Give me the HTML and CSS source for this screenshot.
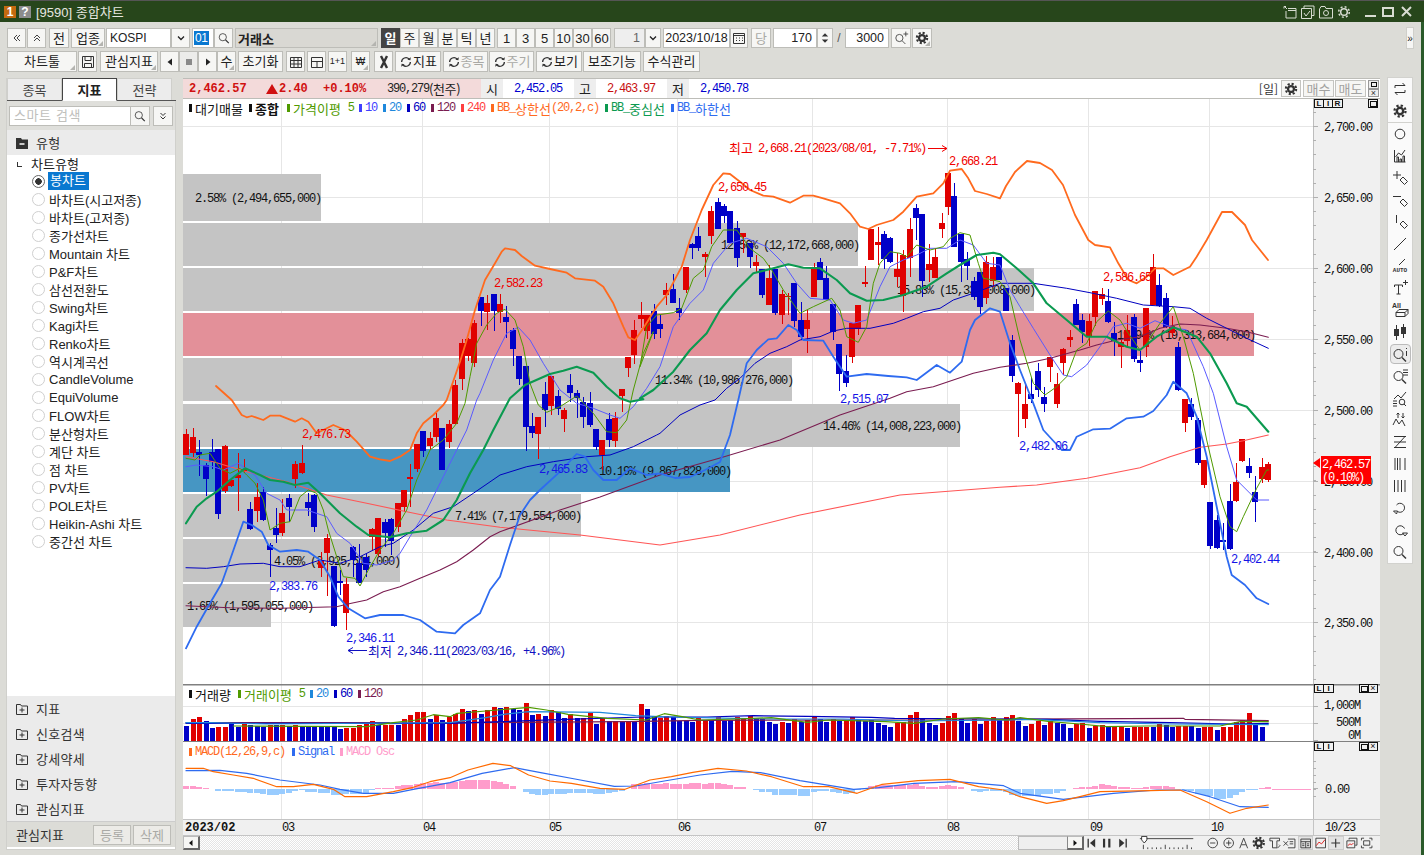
FILE: index.html
```html
<!DOCTYPE html>
<html lang="ko">
<head>
<meta charset="utf-8">
<title>[9590] 종합차트</title>
<link rel="stylesheet" href="styles.css">
</head>
<body>
<svg class="defs" width="0" height="0" aria-hidden="true">
  <symbol id="gear" viewBox="0 0 16 16"><circle cx="8" cy="8" r="3.4" fill="none" stroke="currentColor" stroke-width="2.6"/><circle cx="8" cy="8" r="5.9" fill="none" stroke="currentColor" stroke-width="2.4" stroke-dasharray="2.4 2.23"/></symbol>
  <symbol id="mag" viewBox="0 0 20 20"><circle cx="8.5" cy="9" r="4.5" fill="none" stroke="currentColor"/><path d="M12 12.5l4 4" stroke="currentColor" stroke-width="1.4"/></symbol>
  <symbol id="tag" viewBox="0 0 20 20"><path d="M10 12l3-3 4.5 4.5-3 3z" fill="none" stroke="currentColor"/></symbol>
  <symbol id="ref" viewBox="0 0 16 16"><path d="M3 8a5 5 0 0 1 8.500-3.500M13 8a5 5 0 0 1-8.500 3.500" fill="none" stroke="currentColor" stroke-width="1.500"/><path d="M9.500 5.500l3.500.5.500-3.500zM6.500 10.500L3 10l-.5 3.500z" fill="currentColor"/></symbol>
</svg>

<div class="window">
  <header class="titlebar">
    <span class="wbadge orange">1</span><span class="wbadge grey">?</span>
    <span class="wtitle">[9590] 종합차트</span>
    <span class="wicons">
      <svg class="wi" viewBox="0 0 14 14"><path d="M3 1.500h-2v2M1 1l3 3M5 3.500h8v9.500H3V6M5 5.500h8" fill="none" stroke="currentColor"/></svg>
      <svg class="wi" viewBox="0 0 14 14"><path d="M3 3.500V1h10v9.500h-2M.5 3.500h10v10H.5zM3 8l2 3 4-5" fill="none" stroke="currentColor"/></svg>
      <svg class="wi" viewBox="0 0 14 14"><path d="M.5 3.500V13h13V3.500H7L6 1.500H2L1 3.500" fill="none" stroke="currentColor"/><circle cx="7" cy="8" r="2.500" fill="none" stroke="currentColor"/></svg>
      <svg class="wi" viewBox="0 0 14 14"><circle cx="7" cy="7" r="3.300" fill="none" stroke="currentColor" stroke-width="1.500"/><circle cx="7" cy="7" r="5.300" fill="none" stroke="currentColor" stroke-width="1.500" stroke-dasharray="2 2.160"/></svg>
      <span class="wmin"></span><span class="wmax"></span>
      <svg class="wx" viewBox="0 0 11 11"><path d="M1 1l9 9M10 1l-9 9" stroke="currentColor" stroke-width="2"/></svg>
    </span>
  </header>

  <div class="toolbars">
    <div class="row">
      <button class="b w19 fine"><svg class="i8" viewBox="0 0 8 8"><path d="M4 1L1 4l3 3M7 1L4 4l3 3" fill="none" stroke="currentColor"/></svg></button>
      <button class="b w19 ml1 fine"><svg class="i8" viewBox="0 0 8 8"><path d="M1 4l3-3 3 3M1 7l3-3 3 3" fill="none" stroke="currentColor"/></svg></button>
      <button class="b w20 ml3">전</button>
      <button class="b w34 ml2 corner">업종</button>
      <div class="field w65 ml1 left">KOSPI</div>
      <button class="b w19"><svg class="i8" viewBox="0 0 8 8"><path d="M1 2.500l3 3 3-3" fill="none" stroke="currentColor" stroke-width="1.300"/></svg></button>
      <div class="field w22 ml2 codef"><span class="sel">01</span></div>
      <button class="b w19"><svg class="i16" viewBox="0 0 20 20"><use href="#mag"/></svg></button>
      <div class="field w143 ml2 exch corner">거래소</div>
      <button class="b w19 ml3 on">일</button><button class="b w19">주</button><button class="b w19">월</button><button class="b w19">분</button><button class="b w19">틱</button><button class="b w19">년</button>
      <button class="b w19 ml2">1</button><button class="b w19">3</button><button class="b w19">5</button><button class="b w19">10</button><button class="b w19">30</button><button class="b w19">60</button>
      <div class="field w31 ml3 right dimf">1</div>
      <button class="b w16"><svg class="i8" viewBox="0 0 8 8"><path d="M1 2.500l3 3 3-3" fill="none" stroke="currentColor" stroke-width="1.300"/></svg></button>
      <div class="field w67 ml2 center">2023/10/18</div>
      <button class="b w18"><svg class="i16" viewBox="0 0 16 16"><path d="M2.500 3.500h11v10h-11zM2.500 5.500h11M5 8h1M8 8h1M11 8h1M5 10.500h1M8 10.500h1M11 10.500h1" fill="none" stroke="currentColor"/></svg></button>
      <button class="b w20 ml3 dis">당</button>
      <div class="field w44 ml2 right">170</div>
      <button class="b w16 spin"><svg class="i16" viewBox="0 0 16 20"><path d="M8 4l4 4H4zM8 16l4-4H4z" fill="currentColor"/></svg></button>
      <span class="slash">/</span>
      <div class="field w44 right">3000</div>
      <button class="b w20 ml2"><svg class="i16" viewBox="0 0 20 20"><circle cx="8" cy="10" r="4.500" fill="none" stroke="currentColor"/><path d="M11.500 13.500l4 4M13 5h6M16 2v6" stroke="currentColor" fill="none"/></svg></button>
      <button class="b w20 ml1 corner"><svg class="i14" viewBox="0 0 16 16"><use href="#gear"/></svg></button>
      <button class="more">»</button>
    </div>
    <div class="row r2">
      <button class="b w70 corner">차트툴</button>
      <button class="b w19 ml1"><svg class="i16" viewBox="0 0 16 16"><path d="M2.500 2.500h11v11h-11zM5 2.500v4h6v-4M4.500 13.500v-4h7v4" fill="none" stroke="currentColor"/></svg></button>
      <button class="b w58 ml3 corner">관심지표</button>
      <button class="b w19 ml2 sym"><svg class="i8" viewBox="0 0 8 8"><path d="M6 .5v7L1.500 4z" fill="currentColor"/></svg></button>
      <button class="b w19 stop"><svg class="i8" viewBox="0 0 8 8"><path d="M1 1h6v6H1z" fill="#8a8a8a"/></svg></button>
      <button class="b w19 sym"><svg class="i8" viewBox="0 0 8 8"><path d="M2 .5v7L6.500 4z" fill="currentColor"/></svg></button>
      <button class="b w19 corner">수</button>
      <button class="b w45 ml2">초기화</button>
      <button class="b w19 ml3"><svg class="i16" viewBox="0 0 16 16"><path d="M2.500 3.500h11v10h-11zM2.500 6.500h11M2.500 10h11M6 3.500v10M10 3.500v10" fill="none" stroke="#333"/></svg></button>
      <button class="b w19 ml2"><svg class="i16" viewBox="0 0 16 16"><path d="M2.500 3.500h11v10h-11zM2.500 7.500h11M8 7.500v6" fill="none" stroke="#333"/></svg></button>
      <button class="b w19 ml2 tiny">1+1</button>
      <button class="b w19 ml4 corner won">₩</button>
      <button class="b w19 ml4"><svg class="i16" viewBox="0 0 16 16"><path d="M5 2l6 12M11 2L5 14" stroke="#333" stroke-width="2.400" fill="none"/></svg></button>
      <button class="b w46 ml2 rf"><svg class="i14" viewBox="0 0 16 16"><use href="#ref"/></svg>지표</button>
      <button class="b w45 ml2 rf dis"><svg class="i14 disi" viewBox="0 0 16 16"><use href="#ref"/></svg>종목</button>
      <button class="b w45 ml1 rf dis"><svg class="i14 disi" viewBox="0 0 16 16"><use href="#ref"/></svg>주기</button>
      <button class="b w46 ml2 rf"><svg class="i14" viewBox="0 0 16 16"><use href="#ref"/></svg>보기</button>
      <button class="b w58 ml1">보조기능</button>
      <button class="b w57 ml2">수식관리</button>
    </div>
  </div>

  <div class="main">
    <aside class="side">
      <nav class="tabs"><span class="tab">종목</span><span class="tab act">지표</span><span class="tab">전략</span></nav>
      <div class="searchrow">
        <div class="search">스마트 검색</div>
        <button class="sbtn"><svg class="i16" viewBox="0 0 20 20"><use href="#mag"/></svg></button>
        <button class="sbtn wide"><svg class="i8" viewBox="0 0 8 8"><path d="M1.500 1l2.500 2.500L6.500 1M1.500 4.500L4 7l2.500-2.500" fill="none" stroke="currentColor"/></svg></button>
      </div>
      <div class="acc head"><svg class="fold" viewBox="0 0 12 12"><path d="M0 1h5l1 1.500h6V12H0z" fill="#333"/><path d="M3.500 7h5" stroke="#fff" stroke-width="1.500"/></svg>유형</div>
      <div class="tree">
        <div class="troot"><i class="ell"></i>차트유형</div>
        <div class="opt"><i class="radio chk"></i><span class="selname">봉차트</span></div>
        <div class="opt"><i class="radio"></i>바차트(시고저종)</div>
        <div class="opt"><i class="radio"></i>바차트(고저종)</div>
        <div class="opt"><i class="radio"></i>종가선차트</div>
        <div class="opt"><i class="radio"></i>Mountain 차트</div>
        <div class="opt"><i class="radio"></i>P&amp;F차트</div>
        <div class="opt"><i class="radio"></i>삼선전환도</div>
        <div class="opt"><i class="radio"></i>Swing차트</div>
        <div class="opt"><i class="radio"></i>Kagi차트</div>
        <div class="opt"><i class="radio"></i>Renko차트</div>
        <div class="opt"><i class="radio"></i>역시계곡선</div>
        <div class="opt"><i class="radio"></i>CandleVolume</div>
        <div class="opt"><i class="radio"></i>EquiVolume</div>
        <div class="opt"><i class="radio"></i>FLOW차트</div>
        <div class="opt"><i class="radio"></i>분산형차트</div>
        <div class="opt"><i class="radio"></i>계단 차트</div>
        <div class="opt"><i class="radio"></i>점 차트</div>
        <div class="opt"><i class="radio"></i>PV차트</div>
        <div class="opt"><i class="radio"></i>POLE차트</div>
        <div class="opt"><i class="radio"></i>Heikin-Ashi 차트</div>
        <div class="opt"><i class="radio"></i>중간선 차트</div>
      </div>
      <div class="acc"><svg class="fold" viewBox="0 0 12 12"><path d="M.5 1.500h4l1 1.500h6v8.500H.5zM3.500 7h5M6 4.500v5" fill="none" stroke="#333"/></svg>지표</div>
      <div class="acc"><svg class="fold" viewBox="0 0 12 12"><path d="M.5 1.500h4l1 1.500h6v8.500H.5zM3.500 7h5M6 4.500v5" fill="none" stroke="#333"/></svg>신호검색</div>
      <div class="acc"><svg class="fold" viewBox="0 0 12 12"><path d="M.5 1.500h4l1 1.500h6v8.500H.5zM3.500 7h5M6 4.500v5" fill="none" stroke="#333"/></svg>강세약세</div>
      <div class="acc"><svg class="fold" viewBox="0 0 12 12"><path d="M.5 1.500h4l1 1.500h6v8.500H.5zM3.500 7h5M6 4.500v5" fill="none" stroke="#333"/></svg>투자자동향</div>
      <div class="acc"><svg class="fold" viewBox="0 0 12 12"><path d="M.5 1.500h4l1 1.500h6v8.500H.5zM3.500 7h5M6 4.500v5" fill="none" stroke="#333"/></svg>관심지표</div>
      <div class="favbar"><span class="favt">관심지표</span><button class="favb">등록</button><button class="favb">삭제</button></div>
    </aside>

    <section class="chart">
      <div class="info">
        <div class="quote"><b class="q1">2,462.57</b><b class="q2"><i class="tri"></i>2.40</b><b class="q3">+0.10%</b><span class="q4">390,279</span><span class="q5">(천주)</span></div>
        <span class="lab">시</span><span class="val blue">2,452.05</span>
        <span class="lab">고</span><span class="val red">2,463.97</span>
        <span class="lab">저</span><span class="val blue">2,450.78</span>
        <span class="period">[일]</span>
        <button class="ibtn gearb"><svg class="i14" viewBox="0 0 16 16"><use href="#gear"/></svg></button>
        <button class="ibtn">매수</button><button class="ibtn">매도</button>
        <span class="mini"><i class="sq"></i><i class="xx">×</i></span>
      </div>

      <div class="pane price">
        <svg id="plot" class="plot" viewBox="183 99 1130 585"></svg>
        <svg id="axis" class="axis" viewBox="1313 99 67 585"></svg>
        <div class="legend">
          <span class="lg k w60">대기매물</span><span class="lg k bold w38">종합</span><span class="lg g w72">가격이평<span class="num sp">5</span></span><span class="lg v w24"><span class="num">10</span></span><span class="lg s w24"><span class="num">20</span></span><span class="lg dk w24"><span class="num">60</span></span><span class="lg m w30"><span class="num">120</span></span><span class="lg r w30"><span class="num">240</span></span><span class="lg o w114"><span class="num">BB_</span>상한선<span class="num">(20,2,c)</span></span><span class="lg t w66"><span class="num">BB_</span>중심선</span><span class="lg u"><span class="num">BB_</span>하한선</span>
        </div>
        <div class="lir"><i>L</i><i>I</i><i>R</i></div><div class="lbox"><i class="sq"></i></div>
      </div>
      <div class="pane vol">
        <svg id="vplot" class="plot" viewBox="183 684 1130 58"></svg>
        <svg id="vaxis" class="axis" viewBox="1313 684 67 58"></svg>
        <div class="legend lg2">
          <span class="lg k w49">거래량</span><span class="lg g w72">거래이평<span class="num sp">5</span></span><span class="lg s w24"><span class="num">20</span></span><span class="lg dk w24"><span class="num">60</span></span><span class="lg m"><span class="num">120</span></span>
        </div>
        <div class="lir"><i>L</i><i>I</i></div><div class="lbox two"><i class="sq"></i><i class="xx">×</i></div>
      </div>
      <div class="pane macd">
        <svg id="mplot" class="plot" viewBox="183 742 1130 77"></svg>
        <svg id="maxis" class="axis" viewBox="1313 742 67 77"></svg>
        <div class="legend lg2">
          <span class="lg o w103"><span class="num">MACD(12,26,9,c)</span></span><span class="lg u w48"><span class="num">Signal</span></span><span class="lg p"><span class="num">MACD Osc</span></span>
        </div>
        <div class="lir"><i>L</i><i>I</i></div><div class="lbox two"><i class="sq"></i><i class="xx">×</i></div>
      </div>
      <div class="dates">
        <div class="dtrack">
          <b class="d0">2023/02</b>
          <span class="mon d3">03</span><span class="mon d4">04</span><span class="mon d5">05</span><span class="mon d6">06</span><span class="mon d7">07</span><span class="mon d8">08</span><span class="mon d9">09</span><span class="mon d10">10</span>
        </div>
        <div class="dend">10/23</div>
      </div>
      <div class="scroll">
        <button class="sarrow"><svg class="i8" viewBox="0 0 8 8"><path d="M5.500 1v6L2 4z" fill="#111"/></svg></button>
        <div class="strack"></div>
        <div class="sthumb"></div>
        <button class="sarrow r"><svg class="i8" viewBox="0 0 8 8"><path d="M2.500 1v6L6 4z" fill="#111"/></svg></button>
        <div class="stools">
          <svg class="st" viewBox="0 0 16 16"><path d="M4 3v10" stroke="#333" stroke-width="1.500"/><path d="M12 3v10L6 8z" fill="#333"/></svg>
          <svg class="st" viewBox="0 0 16 16"><path d="M5 3v10M11 3v10" stroke="#333" stroke-width="2.500"/></svg>
          <svg class="st" viewBox="0 0 16 16"><path d="M12 3v10" stroke="#333" stroke-width="1.500"/><path d="M4 3v10l6-5z" fill="#333"/></svg>
          <svg class="ruler" viewBox="0 0 62 16"><path d="M0 3h61M4 10v5M9 13v2M14 13v2M19 13v2M24 13v2M29 10v5M34 13v2M39 13v2M44 13v2M49 13v2M54 10v5M59 13v2" stroke="#333" fill="none"/><path d="M2 .5h6v4L5 8 2 4.500z" fill="#fff" stroke="#222"/></svg>
          <svg class="st" viewBox="0 0 16 16"><circle cx="8" cy="8" r="5.500" fill="none" stroke="#333"/><path d="M5 8h6" stroke="#333"/></svg>
          <svg class="st" viewBox="0 0 16 16"><circle cx="8" cy="8" r="5.500" fill="none" stroke="#333"/><path d="M5 8h6M8 5v6" stroke="#333"/></svg>
          <svg class="st" viewBox="0 0 16 16"><path d="M3.500 14L8 2.500 12.500 14M5.500 10h5" fill="none" stroke="#333"/></svg>
          <svg class="st" viewBox="0 0 16 16"><use href="#gear"/></svg>
          <svg class="st" viewBox="0 0 16 16"><path d="M2.500 2.500h11v3h-3v8h-5v-8h-3zM13 10l1 1-3 3" fill="none" stroke="#333"/></svg>
          <svg class="st" viewBox="0 0 16 16"><path d="M6 3.500h8v10H6M1 6l5 5M6 6l-5 5M8 6.500h4M8 9h4" fill="none" stroke="#333"/></svg>
          <svg class="st hl" viewBox="0 0 16 16"><path d="M2.500 3.500h11v10h-11zM2.500 6.500h11M8 6.500v7M4 9h2.500M4 11h2.500M9.500 9H12M9.500 11H12" fill="none" stroke="#333"/></svg>
          <svg class="st" viewBox="0 0 16 16"><path d="M2.500 2.500h11v11h-11z" fill="none" stroke="#333"/><path d="M3 11l3-4 3 2 4-5" fill="none" stroke="#d11"/></svg>
          <svg class="st hl" viewBox="0 0 16 16"><path d="M8 3v10M3 8h10" stroke="#333" stroke-width="1.300"/></svg>
          <svg class="st" viewBox="0 0 16 16"><path d="M5 4V2.500h9v8h-2M2.500 5.500h9v8h-9z" fill="none" stroke="#333"/><path d="M3.500 11l2.500-2 2 1 2-2" fill="none" stroke="#d11"/></svg>
          <svg class="st" viewBox="0 0 16 16"><path d="M2 5V2.500h3M11 2.500h3V5M14 11v2.500h-3M5 13.500H2V11M4.500 5.500h7v5h-7z" fill="none" stroke="#333"/></svg>
        </div>
      </div>
    </section>

    <aside class="rtools">
      <svg class="rt" viewBox="0 0 20 20"><path d="M5 9V6.500h10L12.500 4M15 11v2.500H5L7.500 16" fill="none" stroke="#333"/></svg>
      <svg class="rt" viewBox="0 0 20 20"><use href="#gear" x="2.500" y="2.500" width="15" height="15"/></svg>
      <i class="rsep"></i>
      <svg class="rt" viewBox="0 0 20 20"><circle cx="10" cy="10" r="4.800" fill="none" stroke="#333"/></svg>
      <svg class="rt" viewBox="0 0 20 20"><path d="M4.500 4v12h11M7 16v-5h1.500v5M10 16v-3h1.500v3M13 16v-6h1.500v6M5.500 11l3-4 3 2 3.500-5" fill="none" stroke="#333"/></svg>
      <svg class="rt" viewBox="0 0 20 20"><path d="M3 7h8M7 3v8" stroke="#333" fill="none"/><use href="#tag" width="20" height="20" color="#333"/></svg>
      <svg class="rt" viewBox="0 0 20 20"><path d="M3 6.500h8" stroke="#333" fill="none"/><use href="#tag" width="20" height="20" color="#333"/></svg>
      <svg class="rt" viewBox="0 0 20 20"><path d="M6.500 3v8" stroke="#333" fill="none"/><use href="#tag" width="20" height="20" color="#333"/></svg>
      <svg class="rt" viewBox="0 0 20 20"><path d="M4 16L16 4" stroke="#333" fill="none"/></svg>
      <svg class="rt" viewBox="0 0 20 20"><path d="M9 9l6-6" stroke="#333" fill="none"/><text class="autot" x="10" y="16" text-anchor="middle">AUTO</text></svg>
      <svg class="rt" viewBox="0 0 20 20"><path d="M4.500 9V7h8v2M8.500 7v9M6.500 16h4M13 4.500h5M15.500 2v5" stroke="#333" fill="none"/></svg>
      <svg class="rt" viewBox="0 0 20 20"><text class="allt" x="2" y="8">All</text><path d="M6 12.500h9v4H6zM6 12.500l3-3h9l-3 3M15 16.500l3-3v-4" fill="none" stroke="#333"/></svg>
      <svg class="rt" viewBox="0 0 20 20"><path d="M6.500 3v15M13.500 2v14" stroke="#333"/><path d="M4 7h5v7H4zM11 5h5v7h-5z" fill="#333"/></svg>
      <div class="rsel"><svg class="rt" viewBox="0 0 20 20"><use href="#mag" width="20" height="20" y="1" color="#333"/><path d="M16.500 4v1M16.500 7v5" stroke="#333"/></svg></div>
      <svg class="rt" viewBox="0 0 20 20"><use href="#mag" width="20" height="20" y="1" color="#333"/><path d="M13 4h5M13 6.500h5M13 9h5" stroke="#333"/></svg>
      <svg class="rt" viewBox="0 0 20 20"><path d="M4 11l4-4 3 3 5-6M3 13h4M3 15.500h4M3 18h4" fill="none" stroke="#333"/><circle cx="12" cy="14" r="2.800" fill="none" stroke="#333"/><path d="M14 16l2 2" stroke="#333"/></svg>
      <svg class="rt" viewBox="0 0 20 20"><path d="M3 15l3-6 3 5 3-4 3 6" fill="none" stroke="#333"/><path d="M8 8V3M6.500 4.500L8 3l1.500 1.500M13 3v5M11.500 6.500L13 8l1.500-1.500" fill="none" stroke="#333"/></svg>
      <svg class="rt" viewBox="0 0 20 20"><path d="M4 4.500h12M4 10h12M4 15.500h12M15 4.500L5 15.500" stroke="#333" fill="none"/></svg>
      <svg class="rt" viewBox="0 0 20 20"><path d="M5 4v12M7.500 4v12M10 4v12M15 4v12" stroke="#333" fill="none"/></svg>
      <svg class="rt" viewBox="0 0 20 20"><path d="M4.500 4v12M8 4v12M11.500 4v12M15 4v12" stroke="#333" fill="none"/></svg>
      <svg class="rt" viewBox="0 0 20 20"><path d="M6.500 7a4.500 4.500 0 1 1 1 6.500M3.500 13l4 0-1 3z" fill="none" stroke="#333"/></svg>
      <svg class="rt" viewBox="0 0 20 20"><path d="M13.500 13.500a4.500 4.500 0 1 1 1-5M12.500 13h5l-2.500 3z" fill="none" stroke="#333"/></svg>
      <svg class="rt" viewBox="0 0 20 20"><use href="#mag" width="20" height="20" color="#333"/></svg>
    </aside>
  </div>
</div>
<script src="chart.js"></script>
</body>
</html>
```
FILE: styles.css
```css
*{box-sizing:border-box}
html,body{margin:0;padding:0;height:100%;overflow:hidden}
body{background:#dcdcd7;font-family:"Liberation Sans","Noto Sans CJK KR",sans-serif;font-size:13px;color:#222}
.defs{position:absolute}
button{font:inherit;color:inherit;padding:0;margin:0;display:flex;align-items:center;justify-content:center}
.window{width:1424px;height:855px;display:flex;flex-direction:column;border-right:3px solid #2a5a2a;position:relative}
.titlebar{height:22px;flex:none;background:#27461b;border-top:1px solid #555;display:flex;align-items:center;padding-left:4px;color:#e6e6e0;margin-right:-3px}
.wbadge{width:12px;height:12px;display:flex;align-items:center;justify-content:center;font:bold 12px "Liberation Sans";color:#fff;margin-right:3px}
.wbadge.orange{background:#c46a10}.wbadge.grey{background:#8c8c8c}
.wtitle{margin-left:2px;font-size:13px}
.wicons{margin-left:auto;display:flex;align-items:center;color:#d8dcd2;height:100%;padding-right:12px}
.wi{width:14px;height:14px;margin-right:4px}
.wmin{width:11px;height:2px;background:#d8dcd2;margin:9px 6px 0 10px}
.wmax{width:12px;height:10px;border:2px solid #d8dcd2;margin-right:7px}
.wx{width:11px;height:11px}
.toolbars{padding:6px 0 0 7px;height:56px;flex:none}
.row{display:flex;height:20px}
.r2{margin-top:3px;height:21px}
.b{height:100%;background:#f6f6f4;border:1px solid #bdbdb8;font-size:13px;position:relative;flex:none;line-height:1;white-space:nowrap}
.on{background:#444;color:#fff;border-color:#444;font-weight:bold}
.dis{color:#a9a9a5}
.disi{color:#a9a9a5}
.fine{color:#444}
.tiny{font-size:9px}
.won{font-size:10px}
.sym{color:#222}
.stop{background:#ececea}
.corner::after{content:"";position:absolute;right:1px;bottom:1px;border-style:solid;border-width:0 0 5px 5px;border-color:transparent transparent #b4b4b0 transparent}
.field{height:100%;background:#fff;border:1px solid #bdbdb8;display:flex;align-items:center;padding:0 4px;flex:none;position:relative;font-size:12.5px}
.field.left{justify-content:flex-start;font-size:12px;padding-left:3px}
.field.right{justify-content:flex-end}
.field.center{justify-content:center;padding:0}
.dimf{background:#eee;color:#666}
.codef{padding:0 0 0 1px}
.sel{background:#0a78d0;color:#fff;letter-spacing:-.3px;font-size:12px;line-height:14px;padding:0 1px}
.exch{background:#d9d8d3;font-weight:bold;justify-content:flex-start;padding-left:2px;font-size:13px}
.w16{width:16px}.w18{width:18px}.w19{width:19px}.w20{width:20px}.w22{width:22px}.w31{width:31px}.w34{width:34px}.w44{width:44px}.w45{width:45px}.w46{width:46px}.w57{width:57px}.w58{width:58px}.w65{width:65px}.w67{width:67px}.w70{width:70px}.w143{width:143px}
.ml1{margin-left:1px}.ml2{margin-left:2px}.ml3{margin-left:3px}.ml4{margin-left:4px}
.slash{width:12px;flex:none;text-align:center;color:#555;font-size:12px;line-height:20px}
.more{margin:-1px 7px 0 auto;width:8px;height:22px;background:#f6f6f4;border:1px solid #cfcfca;font-size:10px;flex:none}
.i8{width:8px;height:8px}.i14{width:14px;height:14px;color:#333}.i16{width:16px;height:16px;color:#333;flex:none}
.spin{color:#444}
.main{display:flex;flex:1;min-height:0;padding-left:6px}
.side{width:170px;height:772px;flex:none;display:flex;flex-direction:column;background:#fff;border:1px solid #d0d0cc;border-top:0}
.tabs{display:flex;height:23px;flex:none;border-bottom:1px solid #555;margin-right:-1px;background:#dcdcd7}
.tab{width:55px;display:flex;align-items:center;justify-content:center;background:#ececec;border:1px solid #cfcfcb;border-bottom:0;color:#444}
.tab.act{background:#fff;border:1px solid #444;border-bottom:1px solid #fff;height:23px;font-weight:bold;color:#222}
.searchrow{display:flex;height:29px;padding:5px 0 0 2px;background:#dfdfdb;flex:none}
.search{width:122px;height:20px;background:#fff;border:1px solid #bdbdb8;color:#c0c0bc;padding-left:4px;line-height:18px;font-size:13px;letter-spacing:.6px}
.sbtn{width:19px;height:20px;background:#f6f6f4;border:1px solid #bdbdb8;border-left:0;flex:none}
.sbtn.wide{border-left:1px solid #bdbdb8;margin-left:3px;width:20px;color:#333}
.acc{height:25px;flex:none;background:#ebebeb;display:flex;align-items:center;padding-left:9px;color:#333;letter-spacing:.3px}
.fold{width:12px;height:12px;margin-right:8px;flex:none}
.tree{height:541px;flex:none;background:#fff}
.troot{height:17px;display:flex;align-items:center;padding-left:10px;color:#222}
.ell{width:5px;height:5px;border-left:1px solid #333;border-bottom:1px solid #333;margin-right:9px;margin-top:2px}
.opt{height:18px;display:flex;align-items:center;padding-left:24px;color:#222;white-space:nowrap}
.radio{width:13px;height:13px;border-radius:50%;border:1px solid #cfcfcf;margin-right:4px;flex:none;background:#fff;margin-left:1px}
.radio.chk{border-color:#666;background:radial-gradient(circle,#333 0 3px,#fff 3.5px);margin-right:3px}
.selname{background:#0a78d0;color:#fff;padding:0 0 0 2px;height:18px;line-height:18px;width:41px}
.favbar{height:26px;flex:none;background:#dcdcd7;display:flex;align-items:center;padding-left:9px;color:#333;border-top:1px solid #ccc}
.favt{width:77px}
.favb{width:38px;height:20px;border:1px solid #bdbdb8;background:#ecebe7;color:#a9a9a5;margin-right:2px}
.chart{width:1197px;margin-left:7px;flex:none;height:772px;display:flex;flex-direction:column}
.info{height:21px;flex:none;background:#fff;border-top:1px solid #bdbdb8;border-bottom:1px solid #bdbdb8;display:flex;align-items:center;font-family:"Liberation Mono",monospace;font-size:12px;position:relative}
.quote{width:298px;height:100%;background:#f3dada;display:flex;align-items:center;padding-left:6px;flex:none}
.q1{color:#d01010;width:77px}
.q2{color:#d01010;width:57px;display:flex;align-items:center}
.tri{width:0;height:0;border-style:solid;border-width:0 6px 10px 6px;border-color:transparent transparent #d01010 transparent;margin-right:1px}
.q3{color:#d01010;width:64px}
.q4{color:#222;letter-spacing:-1.200px;font-size:12px}
.q5{font-family:"Noto Sans CJK KR",sans-serif;font-size:13px;color:#222;letter-spacing:-.4px}
.lab{width:22px;height:100%;background:#eee;display:flex;align-items:center;justify-content:center;font-family:"Noto Sans CJK KR",sans-serif;font-size:13px}
.val{width:71px;padding-left:11px;font-size:12px;letter-spacing:-1.200px}
.blue{color:#0000d0}.red{color:#c81010}
.period{margin-left:auto;font-family:"Noto Sans CJK KR",sans-serif;font-size:12px;margin-right:3px;color:#333}
.ibtn{width:31px;height:17px;border:1px solid #c4c4c0;background:#f6f6f4;color:#a2a2a0;font-family:"Noto Sans CJK KR",sans-serif;font-size:13px;margin-right:1px;flex:none}
.gearb{width:20px;margin-right:2px;color:#333}
.mini{width:11px;height:17px;display:flex;flex-direction:column;margin:0 1px}
.mini i,.lbox i,.lir i{font-style:normal}
.mini i{height:8.500px;border:1px solid #999;background:#eee;overflow:hidden}
.sq{display:flex;align-items:center;justify-content:center}
.sq::after{content:"";width:5px;height:4px;border:1px solid #111}
.mini .sq::after{width:4px;height:3px}
.xx{font:9px/7px "Liberation Sans";text-align:center;color:#333}
.pane{position:relative;display:flex;flex:none}
.price{height:585px}.vol{height:58px}.macd{height:77px}
.plot{width:1130px;height:100%;display:block;flex:none;background:#fff}
.axis{width:67px;height:100%;display:block;flex:none;background:#f0f0f0}
.legend{position:absolute;left:6px;top:0;display:flex;height:18px;align-items:center;white-space:nowrap;font-size:13px}
.lg2{top:1px}
.lg{display:flex;align-items:center;flex:none}
.lg::before{content:"";width:3px;height:8px;background:currentColor;margin-right:3px;flex:none}
.num{font-family:"Liberation Mono",monospace;font-size:12px;letter-spacing:-1.200px;white-space:pre}
.sp{margin-left:7px}
.w24{width:24px}.w30{width:30px}.w38{width:38px}.w48{width:48px}.w49{width:49px}.w60{width:60px}.w66{width:66px}.w72{width:72px}.w103{width:103px}.w114{width:114px}
.k{color:#111}.bold{font-weight:bold}.g{color:#4f9a00}.v{color:#4040ff}.s{color:#1e88dc}.dk{color:#0000c0}.m{color:#7a1c50}.r{color:#ff4040}.o{color:#ff6a1e}.t{color:#0b9a50}.u{color:#2e6bf0}.p{color:#ff9ccb}
.lir{position:absolute;left:1131px;top:0;display:flex;border:1px solid #111;height:9px;background:#f0f0f0}
.lir i{width:9px;border-right:1px solid #111;font:bold 8px/8px "Liberation Sans";text-align:center;color:#111}
.lir i:last-child{border-right:0}
.lbox{position:absolute;left:1186px;top:0;display:flex;height:9px}
.lbox.two{left:1177px}
.lbox i{width:10px;height:9px;border:1px solid #111;color:#111;overflow:hidden;margin-left:-1px;background:#f0f0f0}
.dates{height:17px;flex:none;display:flex;background:#f0f0f0;border-top:1px solid #c4c4c4;border-bottom:1px solid #c4c4c4;font-family:"Liberation Mono",monospace;font-size:12px;color:#111}
.dtrack{width:1130px;position:relative;display:flex;align-items:center}
.d0{position:absolute;left:2px;font-size:12px}
.mon{position:absolute;letter-spacing:-1.200px}
.d3{left:99px}.d4{left:240px}.d5{left:366px}.d6{left:495px}.d7{left:631px}.d8{left:764px}.d9{left:907px}.d10{left:1028px}
.dend{padding-left:11px;letter-spacing:-1.200px;line-height:16px;border-left:1px solid #c4c4c4;flex:1}
.scroll{height:14px;flex:none;display:flex;align-items:stretch;background:#f0f0f0}
.sarrow{width:17px;background:#f6f6f4;border:1px solid #bbb;border-right:2px solid #666;border-bottom:2px solid #666;flex:none}
.sarrow.r{border-left:1px solid #888}
.strack{flex:none;width:818px;background:repeating-conic-gradient(#e4e4e4 0 25%,#fff 0 50%) 0 0/2px 2px}
.sthumb{width:49px;background:#efefef;border:1px solid #bbb;border-right:0;flex:none}
.stools{display:flex;align-items:center;flex:none;width:295px}
.st{width:15.400px;height:14px;flex:none;color:#333}
.st.hl{background:#e3e3e3;outline:1px solid #ccc;outline-offset:-1px}
.ruler{width:62px;height:14px;flex:none;margin:0 7px 0 6px}
.rtools{width:26px;height:487px;margin:-1px 0 0 7px;flex:none;background:#fafafa;border:1px solid #d2d2ce;display:flex;flex-direction:column;align-items:center}
.rt{width:20px;height:20px;flex:none;margin:1px 0;display:block;color:#333}
.rsep{display:block;width:24px;height:1px;background:#d2d2ce;flex:none}
.rsel{width:21px;height:20px;border:1px solid #bbb;border-radius:4px;background:#ececec;display:flex;align-items:center;justify-content:center;margin:1px 0;flex:none}
.rsel .rt{margin:0}
.autot{font:bold 6px "Liberation Mono",monospace;fill:#333}
.allt{font:bold 7px "Liberation Sans";fill:#333}
svg text{white-space:pre}
.mono{font-family:"Liberation Mono",monospace;font-size:12px;letter-spacing:-1.200px}
.han{font-family:"Noto Sans CJK KR",sans-serif;font-size:13px}
.tk{fill:#111}.tr{fill:#f00000}.tb{fill:#1414e6}.tn{fill:#1010c0}.tw{fill:#fff}
.gr{stroke:#e6e6e6;stroke-width:1}
.ln{fill:none;stroke-linejoin:round;stroke-linecap:round}
.up{stroke:#ff6a1e;stroke-width:1.800}
.mid{stroke:#0b9a50;stroke-width:2.100}
.low{stroke:#2e6bf0;stroke-width:1.800}
.ma5{stroke:#4f9a00;stroke-width:1}
.ma10{stroke:#5a5aff;stroke-width:1}
.ma60{stroke:#0000c0;stroke-width:1}
.ma120{stroke:#7a1c50;stroke-width:1.100}
.ma240{stroke:#ff5555;stroke-width:1.100}
.vg{stroke:#4f9a00;stroke-width:1.200}.vs{stroke:#1e88dc;stroke-width:1.200}.vd{stroke:#0000c0;stroke-width:1.200}.vm{stroke:#7a1c50;stroke-width:1.200}
.mo{stroke:#ff6a00;stroke-width:1.200}.mb{stroke:#2e6bf0;stroke-width:1.200}
.band{fill:#c4c4c4}.band.pink{fill:#e39099}.band.sky{fill:#4696c3}
.cr{fill:#e00000}.cb{fill:#0000c8}
.osp{fill:#ff9ccb}.osn{fill:#99ccff}
.crisp{shape-rendering:crispEdges}
.tick{stroke:#b0b0b0;stroke-width:1}
.edge{stroke:#bdbdbd;stroke-width:1}
.split{stroke:#808080;stroke-width:1.500}
.arrow{stroke:currentColor;fill:none}
.ar{color:#f00000}.an{color:#1010c0}
```
FILE: chart.js
```js
// Daily KOSPI candles, read as [high, bodyTop, bodyBottom, low, isBlue], with y in tripled pixel units per block.
const X = i => 186.3 + 6.4 * i;
const seg = (x0, y0, a, sx = 3, sy = 3) => {
  const o = [];
  for (let k = 0; k < a.length; k += 2) o.push([x0 + a[k] / sx, y0 + a[k + 1] / sy]);
  return o;
};
const blocks = [
  [400, [[88,102,165,165,0],[85,110,158,170,0],[120,155,165,228,1],[190,195,237,287,1],[118,155,185,207,1],[147,147,342,356,1],[135,138,273,280,0],[240,240,258,262,0],[160,225,233,332,0],[178,206,212,220,0],[305,327,387,390,1],[248,291,333,365,0],[262,275,360,362,1],[429,435,450,530,1],[325,384,404,430,1],[297,339,399,408,0],[283,295,322,365,1],[183,192,238,265,0],[135,188,218,222,0],[278,306,323,347,1],[283,285,380,395,1],[455,480,503,530,0],[403,414,458,587,0],[498,498,678,680,1],[510,543,545,585,1],[535,552,638,690,0],[438,441,480,530,1],[433,490,548,550,1],[462,470,510,530,1],[385,387,412,450,0],[353,353,462,468,0],[358,366,398,440,1],[355,358,422,465,1],[310,310,380,395,0],[270,270,320,337,0],[193,231,235,320,0],[132,132,206,215,0],[93,93,152,170,1],[96,113,137,150,0],[40,55,110,125,0],[85,85,210,210,1],[60,72,125,145,0],[-60,-45,72,72,0]]],
  [250, [[268,280,386,420,0],[265,268,317,332,0],[210,220,338,350,0],[140,142,182,228,1],[135,160,187,240,0],[132,132,183,243,1],[132,162,187,220,0],[168,200,215,265,1],[235,240,296,347,1],[318,318,386,405,1],[348,348,530,603,1],[488,528,548,565,1],[502,502,551,628,0],[395,432,480,530,1],[378,378,468,495,0],[420,438,478,495,1],[475,480,507,545,0],[372,405,428,455,1],[420,430,443,503,1],[440,456,500,533,1],[425,458,525,530,1],[538,538,590,600,1],[570,570,615,660,0],[490,508,570,590,1],[487,505,572,590,0],[417,417,438,485,0],[320,320,353,380,0],[210,240,315,342,0]]],
  [130, [[515,555,567,595,0],[555,555,603,628,0],[522,543,612,628,1],[555,582,597,625,1],[460,480,495,525,0],[433,477,520,520,1],[505,535,550,570,1],[411,411,480,490,0],[338,342,355,387,1],[290,318,353,362,1],[366,372,382,440,0],[228,243,318,342,0],[205,216,296,296,1],[222,228,258,278,1],[243,243,340,340,1],[272,294,384,410,1],[310,310,320,368,0],[338,340,380,415,1],[375,396,408,425,0],[418,418,495,505,1],[405,445,525,525,0],[418,418,550,555,1],[480,492,555,582,0],[490,497,499,555,0],[460,460,572,590,1],[515,570,622,630,1],[540,570,596,668,0],[398,412,500,500,0],[385,396,450,450,1],[408,443,510,510,1],[522,522,605,630,1],[642,642,732,782,1],[675,722,760,770,1],[578,578,680,698,0],[525,525,598,615,0],[407,456,463,470,0],[296,296,390,390,0],[290,335,345,405,0],[303,312,388,418,1],[320,323,397,400,1],[370,417,440,470,0],[360,375,497,545,0],[265,296,385,440,0],[222,233,263,330,1],[252,252,452,500,1],[342,402,420,455,0],[355,380,445,445,0],[248,278,297,325,0],[130,130,230,255,0],[158,198,350,350,1],[312,312,395,455,1],[365,388,408,450,1],[440,453,500,510,1],[425,425,530,552,1],[377,396,503,522,0],[380,412,452,470,0],[380,380,450,450,1]]],
  [240, [[145,145,212,212,1],[285,300,408,425,1],[425,430,462,590,0],[430,492,536,565,0],[410,462,478,490,1],[370,393,450,472,1],[440,472,491,515,1],[350,352,380,425,0],[400,432,491,505,0],[325,327,368,405,0],[270,292,299,322,0],[177,192,255,255,1],[222,240,276,310,1],[222,243,288,318,0],[152,153,230,258,0],[145,162,178,195,0],[148,183,245,248,1],[245,280,303,348,1],[300,305,322,385,0],[225,270,302,325,0],[222,232,358,365,1],[332,360,368,395,1],[205,205,322,350,0],[42,82,195,195,0],[102,135,198,200,1],[160,175,262,265,1],[228,258,278,290,0],[305,320,450,452,1],[478,478,550,575,0],[475,492,532,540,1],[535,540,670,675,1],[660,660,736,745,0],[785,785,917,928,1],[825,840,925,928,1],[850,900,902,930,1],[732,783,928,930,1],[668,727,783,785,0],[597,597,662,665,0],[655,678,700,715,1],[708,757,785,845,1],[655,682,718,730,0],[665,672,720,725,0]]]
];
const candles = [];
blocks.forEach(([y0, rows]) => rows.forEach(r => candles.push({ h: y0 + r[0] / 3, t: y0 + r[1] / 3, b: y0 + r[2] / 3, l: y0 + r[3] / 3, blue: !!r[4] })));

const series = {
  up: [[216,386],...seg(180,400,[155,0,185,45,200,52,215,48,250,60,270,47,300,47,345,65,365,55,385,65,410,100,460,75,495,90,530,125,570,170,600,178,630,183,660,170,690,150,710,100,730,70,760,45,790,15,800,0]),...seg(460,250,[0,335,20,270,45,180,75,90,105,40,125,5,135,-5,165,0,185,18,225,47,270,57,320,68,345,85,405,92,430,110,460,160,490,230,505,262,525,270,550,235]),...seg(640,130,[50,530,80,495,125,410,150,330,185,240,220,165,250,130,270,132,300,155,330,180,370,197,400,200,450,218,490,197,520,197,550,205,600,220,630,250,660,290,685,297,710,285,760,270,790,245,830,200,880,190,910,160,930,122,965,117,985,145,1005,183,1040,192,1080,205]),[1006,186],[1015,172],[1027,161],[1040,163],[1052,170],[1063,185],[1075,215],...seg(1000,240,[265,0,285,15,330,22,355,70,385,120,410,130,440,110,465,85,490,85,520,105,570,80,590,50,620,0]),[1222,212],[1232,212],[1245,225],[1252,240],[1268,260]],
  mid: [...seg(180,400,[18,370,50,320,80,295,110,275,150,240,195,205,240,225,270,240,310,245,345,255,385,248,420,280,480,340,530,380,565,405,630,412,680,400,740,392,790,360,830,300,870,220,910,150]),...seg(460,250,[100,540,150,445,195,405,270,372,310,362,350,350,400,368,440,410,480,445,510,455,550,448]),...seg(640,130,[0,805,40,780,100,725,150,660,200,610,240,540,290,480,340,430,400,415,445,403,490,413,540,415,590,450,630,490,680,512,730,510,790,495,860,470,920,430,960,405,1010,375,1060,368,1080,373]),...seg(1000,240,[50,85,100,130,140,190,200,240,260,290,320,290,380,320,420,330,470,290,520,262,590,290,630,340,680,430,710,490,740,500,805,575])],
  low: [...seg(180,400,[18,745,50,680,90,610,125,550,150,480,190,365,215,375,245,395,265,435,300,455,350,450,385,455,420,480,450,530,475,590,505,625,555,655,600,645,670,645,720,660,770,695,825,700,850,675,900,640,930,570,960,530]),[510,545],[520,515],[530,500],...seg(460,250,[240,720,300,665,350,612,375,620,400,660,430,690,470,690,510,655,560,675,600,670]),[675,478],[690,477],[705,470],[720,462],[730,435],...seg(640,130,[295,810,320,700,350,660,385,628,410,625,445,585,470,600,490,630,550,632,580,680,620,740,680,732,745,738,800,742,830,750,890,705,930,728,965,695,990,600,1005,570,1050,535,1080,545]),...seg(1000,240,[30,310,60,390,100,490,130,570,185,630,210,630,230,590,280,568,330,566,380,535,430,530,460,513,500,465,520,425,560,460,590,530,620,650,650,800,680,950,695,1005,735,1035,770,1075,805,1092])],
  ma5: [...seg(180,400,[18,175,45,180,60,165,90,160,120,205,150,220,180,205,200,225,225,250,250,300,270,390,300,370,330,365,360,290,385,270,410,280,430,330,445,390,470,470,490,530,525,535,540,558,565,510,600,450,640,400,680,330,710,240,750,150,790,120,830,70,855,10]),...seg(460,250,[30,380,50,280,80,225,110,190,135,178,165,210,190,290,210,400,235,465,260,487,300,470,350,438,400,490,440,545,470,548,500,510,520,420,550,310,580,245]),...seg(640,130,[0,710,20,590,50,555,100,548,125,535,160,445,190,420,215,350,250,300,290,300,330,355,370,385,395,420,430,480,480,550,520,530,575,505,600,540,620,620,655,637,680,590,700,460,720,400,750,365,780,370,800,380,830,345,870,360,910,350,930,325,960,308,990,315,1015,400,1030,445,1060,450,1080,455]),...seg(1000,240,[30,170,60,300,100,430,135,465,170,440,200,410,230,330,260,310,290,245,325,213,360,240,385,280,420,330,440,310,480,250,520,200,550,290,580,400,620,600,660,770,690,860,710,875,730,830,770,745,800,690,806,690])],
  ma10: [...seg(180,400,[18,200,50,195,100,200,130,210,175,190,225,225,260,280,300,300,320,330,380,330,440,350,470,400,510,430,550,490,590,495,640,480,660,460,690,410,740,330,790,230,860,90,890,0]),...seg(460,250,[60,430,100,330,140,250,175,232,210,270,250,340,300,420,350,460,400,475,450,495,480,505,520,470,560,415,600,350]),...seg(640,130,[100,590,150,520,190,480,220,400,270,340,320,325,380,350,430,400,470,460,510,505,570,510,610,570,640,580,680,570,720,470,750,410,790,390,830,375,870,355,920,355,960,330,1000,345,1040,400,1080,405]),...seg(1000,240,[30,150,60,200,100,265,150,345,190,405,215,410,260,375,300,320,340,260,380,250,420,265,465,242,510,260,560,270,610,380,640,460,680,620,710,720,770,780,806,780])],
  ma60: [...seg(180,400,[18,503,80,505,130,500,180,492,250,490,300,500,360,500,420,480,480,490,540,470,600,440,640,430,700,390,760,340,820,320,880,280,960,225]),...seg(460,250,[200,650,280,635,380,620,450,615,520,590,590,555,600,550]),[680,415],[700,405],...seg(640,130,[225,810,260,775,300,745,345,700,390,670,440,650,480,630,540,620,580,603,620,595,690,595,760,580,800,565,850,545,900,535,940,510,1000,490,1080,460]),...seg(1000,240,[100,130,200,145,270,158,350,175,430,195,520,200,570,205,620,235,680,265,740,295,805,325])],
  ma120: [...seg(180,400,[18,617,80,620,150,623,300,625,470,620,500,613,560,600,610,575,660,560,720,535,780,510,830,485,880,450,930,410,960,395]),[560,510],[600,497],[660,475],[720,458],[780,440],[840,415],...seg(640,130,[750,805,800,785,880,770,1000,730]),...seg(1000,240,[0,382,80,370,150,355,240,330,290,315,350,300,420,290,480,265,540,252,600,255,680,265,740,275,805,292])],
  ma240: [...seg(180,400,[18,170,100,185,200,215,320,245,440,285,560,310,680,335,800,360,960,382]),[580,535],[660,545],[720,535],[800,515],[900,495],...seg(1000,240,[0,742,110,735,260,715,420,683,510,650,600,622,680,612,730,602,805,585])]
};

const bands = [
  [174,321,'','2.58% (2,494,655,000)',195],[223,858,'','12.56% (12,172,668,000)',721],[268,1034,'','15.83% (15,331,008,000)',897],[313,1254,'pink','19.94% (19,313,684,000)',1117],[358,792,'','11.34% (10,986,276,000)',655],[404,960,'','14.46% (14,008,223,000)',823],[449,730,'sky','10.19% (9,867,828,000)',599],[494,581,'','7.41% (7,179,554,000)',455],[539,400,'','4.05% (3,925,514,000)',274],[584,271,'','1.65% (1,595,055,000)',187]
];
const months = [281,422,549,677,812,947,1088,1209];
const ticks = [126.5,197.5,268.5,339.5,410.5,481.5,552.5,622.5];
const tickLabels = ['2,700.00','2,650.00','2,600.00','2,550.00','2,500.00','2,450.00','2,400.00','2,350.00'];

const line = (pts, cls) => `<polyline class="ln ${cls}" points="${pts.map(p => p[0].toFixed(1) + ',' + p[1].toFixed(1)).join(' ')}"/>`;
const text = (x, y, s, cls, anchor) => `<text class="mono ${cls}" x="${x}" y="${y}"${anchor ? ` text-anchor="${anchor}"` : ''}>${s}</text>`;
const vgrid = (y1, y2) => months.map(x => `<line class="gr crisp" x1="${x + .5}" x2="${x + .5}" y1="${y1}" y2="${y2}"/>`).join('');

// price pane
let h = vgrid(99, 684);
ticks.forEach(y => h += `<line class="gr crisp" x1="183" x2="1313" y1="${y}" y2="${y}"/>`);
bands.forEach(b => h += `<rect class="band crisp ${b[2]}" x="183" y="${b[0]}" width="${b[1] - 183}" height="43"/>`);
h += `<rect class="band crisp" x="183" y="174" width="138" height="47"/>`;
bands.forEach(b => h += text(b[4], b[0] + (b[0] === 174 ? 28 : 26), b[3], 'tk'));
candles.forEach((c, i) => {
  const x = Math.round(X(i)), k = c.blue ? 'cb' : 'cr';
  h += `<rect class="crisp ${k}" x="${x}" y="${c.h}" width="1" height="${Math.max(c.l - c.h, 1)}"/>`;
  h += `<rect class="crisp ${k}" x="${x - 3}" y="${c.t}" width="6" height="${Math.max(c.b - c.t, 1.5)}"/>`;
});
['ma240','ma120','ma60','ma10','ma5','low','mid','up'].forEach(n => h += line(series[n], n));
[[949,165,'2,668.21','tr'],[718,191,'2,650.45','tr'],[494,287,'2,582.23','tr'],[302,438,'2,476.73','tr'],[1103,281,'2,586.65','tr'],[269,590,'2,383.76','tb'],[346,642,'2,346.11','tb'],[539,473,'2,465.83','tb'],[840,403,'2,515.07','tb'],[1019,450,'2,482.06','tb'],[1231,563,'2,402.44','tb'],[758,152,'2,668.21(2023/08/01, -7.71%)','tr'],[397,655,'2,346.11(2023/03/16, +4.96%)','tn']].forEach(t => h += text(t[0], t[1], t[2], t[3]));
h += `<text class="han tr" x="729" y="153">최고</text><text class="han tn" x="368" y="656">최저</text>`;
h += `<path class="arrow ar" d="M928 148.500h19m-5-3l5 3-5 3"/><path class="arrow an" d="M348 650.500h19m-14-3l-5 3 5 3"/>`;
document.getElementById('plot').innerHTML = h;

// price axis
let a = `<line class="edge crisp" x1="1313.500" x2="1313.500" y1="99" y2="684"/>`;
for (let y = 126.5 - 14.2; y < 684; y += 14.18) a += `<line class="tick crisp" x1="1313" x2="1316" y1="${y}" y2="${y}"/>`;
ticks.forEach((y, i) => {
  a += `<line class="tick crisp" x1="1313" x2="1318" y1="${y}" y2="${y}"/>`;
  a += text(1324, y + 4, tickLabels[i], 'tk');
});
a += `<path d="M1313 463l7-5v10z" fill="#f00"/><rect x="1321" y="456" width="50" height="28" fill="#f00"/>`;
a += text(1322, 468, '2,462.57', 'tw') + text(1322, 481, '(0.10%)', 'tw');
document.getElementById('axis').innerHTML = a;

// volume pane
const vA = [-138,117,110,-123,-145,140,140,-128,-140,128,-135,-138,-142,135,-135,135,-137,135,-137,-137,-137,-140,-137,-137,-147,145,145,135,128,123,-135,135,135,-135,117,105,96,96,-117,105,-120].map(v => (v > 0 ? 1 : -1) * (183 - Math.abs(v)) / 3);
const vB = [65,57,42,-48,45,-57,45,36,-40,36,-42,-45,24,-60,57,-63,45,-50,-69,58,-69,69,54,-87,70,-78,78,-78,78,-78,27,-42,-62,68,62,-65,-77,-77,-81,70,75,-75,65,-77,-75,65,68,62,-70,-72,-81,-87,81,-84,72,-82,75,65,-72,-81,72,-78,75,65,-72,-78,-75,-84,-90,-96,84,80,60,51,-72,-84,-90,84,63,54,-70,-84,72,-87,77,66].map(v => (v > 0 ? 1 : -1) * (138 - Math.abs(v)) / 3);
const vC = [-120,110,105,-122,-138,132,124,-135,122,-130,-133,-144,133,128,-144,138,135,-140,140,140,-144,140,140,142,-142,132,-136,-140,137,137,-137,-144,140,140,-150,140,140,126,120,98,-132,-140].map(v => (v > 0 ? 1 : -1) * (183 - Math.abs(v)) / 3);
const volumes = [...vA, ...vB, ...vC];
let v = vgrid(685, 742);
[706.5, 723.5].forEach(y => v += `<line class="gr crisp" x1="183" x2="1313" y1="${y}" y2="${y}"/>`);
volumes.forEach((val, i) => {
  const hgt = Math.abs(val);
  v += `<rect class="crisp ${val > 0 ? 'cr' : 'cb'}" x="${Math.round(X(i)) - 2}" y="${741 - hgt}" width="5" height="${hgt}"/>`;
});
const vl = {
  vm: [...seg(0,680,[558,128,1168,128,1168,131,1350,128]),...seg(450,695,[500,80,700,76,1240,75,1568,75],2.8,3),...seg(1000,680,[0,118,550,115,555,118,805,122])],
  vd: [...seg(0,680,[558,130,1350,130]),...seg(450,695,[300,74,540,66,720,66,850,62,1000,64,1180,67,1245,70,1568,72],2.8,3),...seg(1000,680,[0,117,140,118,300,124,510,128,700,132,805,130])],
  vs: [...seg(0,680,[558,128,630,128,800,132,1350,128]),...seg(450,695,[100,68,150,58,220,50,420,52,520,62,620,66,800,70,920,72,1100,72,1300,78,1568,75],2.8,3),...seg(1000,680,[100,118,300,128,500,132,805,134])],
  vg: [...seg(0,680,[700,138,1100,140,1180,128,1250,120,1300,104,1350,110]),...seg(450,695,[20,55,100,48,220,37,270,45,330,58,440,70,550,75,600,56,650,65,700,75,800,72,900,68,1000,82,1060,75,1220,80,1300,85,1380,72,1480,68,1560,75],2.8,3),...seg(1000,680,[60,113,150,125,240,132,320,140,440,138,660,138,720,125,805,125])]
};
Object.keys(vl).forEach(k => v += line(vl[k], k));
v += `<line class="split" x1="183" x2="1313" y1="684.700" y2="684.700"/><line class="split" x1="183" x2="1313" y1="741.700" y2="741.700"/>`;
document.getElementById('vplot').innerHTML = v;
let va = `<line class="edge crisp" x1="1313.500" x2="1313.500" y1="684" y2="742"/><line class="split" x1="1313" x2="1380" y1="684.700" y2="684.700"/><line class="split" x1="1313" x2="1380" y1="741.700" y2="741.700"/>`;
[706.5, 723.5, 740.5].forEach(y => va += `<line class="tick crisp" x1="1313" x2="1318" y1="${y}" y2="${y}"/>`);
va += text(1360, 709, '1,000M', 'tk', 'end') + text(1360, 726, '500M', 'tk', 'end') + text(1360, 739, '0M', 'tk', 'end');
document.getElementById('vaxis').innerHTML = va;

// MACD pane
const osc = [3,3,2,1,.5,-2,-2,-2,-3,-3,-4,-4,-5,-6,-6,-5,-4,-2,-1,-3,-3,-4,-4,-6,-6,-5,-5,-5,-4,-1,1,1,1,3,4,4,5,6,6,7,6,6,7,8,9,9,9,9,8,7,5,3,0,-3,-5,-6,-6,-5,-5,-5,-4,-4,-4,-4,-5,-5,-4,-3,-2,0,5,5,6,5,5,6,5,5,5,6,6,5,6,6,5,4,2,2,0,-1,-3,-3,-6,-6,-6,-6,-7,-7,-3,-2,-2,-3,-4,-5,-4,-1,0,3,4,4,4,4,4,4,5,3,2,2,3,4,3,2,0,-2,-3,-2,-2,-2,-3,-6,-7,-7,-7,-7,-5,-5,-4,-2,0,1,2,2,3,5,4,3,2,2,1,1,2,3,3,3,2,0,-1,-2,-5,-6,-7,-10,-10,-9,-6,-3,-1,-1,1,2];
let m = vgrid(743, 819);
osc.forEach((o, i) => {
  if (!o) return;
  const x = Math.round(X(i)) - 3;
  m += o > 0 ? `<rect class="crisp osp" x="${x}" y="${789 - o}" width="6" height="${o}"/>` : `<rect class="crisp osn" x="${x}" y="789" width="6" height="${-o}"/>`;
});
m += `<rect class="crisp osp" x="1272" y="788.500" width="39" height="1"/>`;
const mo = [...seg(0,680,[558,265,610,265,640,275,700,285,760,295,830,320,880,320,940,313,1000,328,1035,350,1100,350,1180,335,1240,322,1290,305,1350,293]),...seg(450,695,[50,225,120,205,170,212,220,240,280,258,340,265,420,280,490,283,560,255,620,245,680,232,750,220,830,228,900,245,990,275,1060,275,1140,295,1210,268,1310,257,1400,253,1480,275,1550,285],2.8,3),...seg(1000,680,[60,350,140,370,190,362,240,350,300,335,450,332,540,330,620,365,690,400,740,385,805,375])];
const mb = [...seg(0,680,[558,272,660,271,740,280,840,300,960,315,1020,328,1090,340,1180,340,1240,328,1350,308]),...seg(450,695,[90,235,180,218,250,232,350,252,460,274,520,273,600,258,700,240,790,229,870,233,980,257,1130,283,1200,278,1300,265,1420,260,1550,272],2.8,3),...seg(1000,680,[60,340,190,358,260,350,340,340,470,330,550,330,630,350,720,380,805,382])];
m += line(mb, 'mb') + line(mo, 'mo');
document.getElementById('mplot').innerHTML = m;
let ma = `<line class="edge crisp" x1="1313.500" x2="1313.500" y1="742" y2="819"/>`;
for (let y = 761; y < 800; y += 7) ma += `<line class="tick crisp" x1="1313" x2="1316" y1="${y + .5}" y2="${y + .5}"/>`;
ma += `<line class="tick crisp" x1="1313" x2="1318" y1="788.500" y2="788.500"/>` + text(1325, 793, '0.00', 'tk');
document.getElementById('maxis').innerHTML = ma;
```
